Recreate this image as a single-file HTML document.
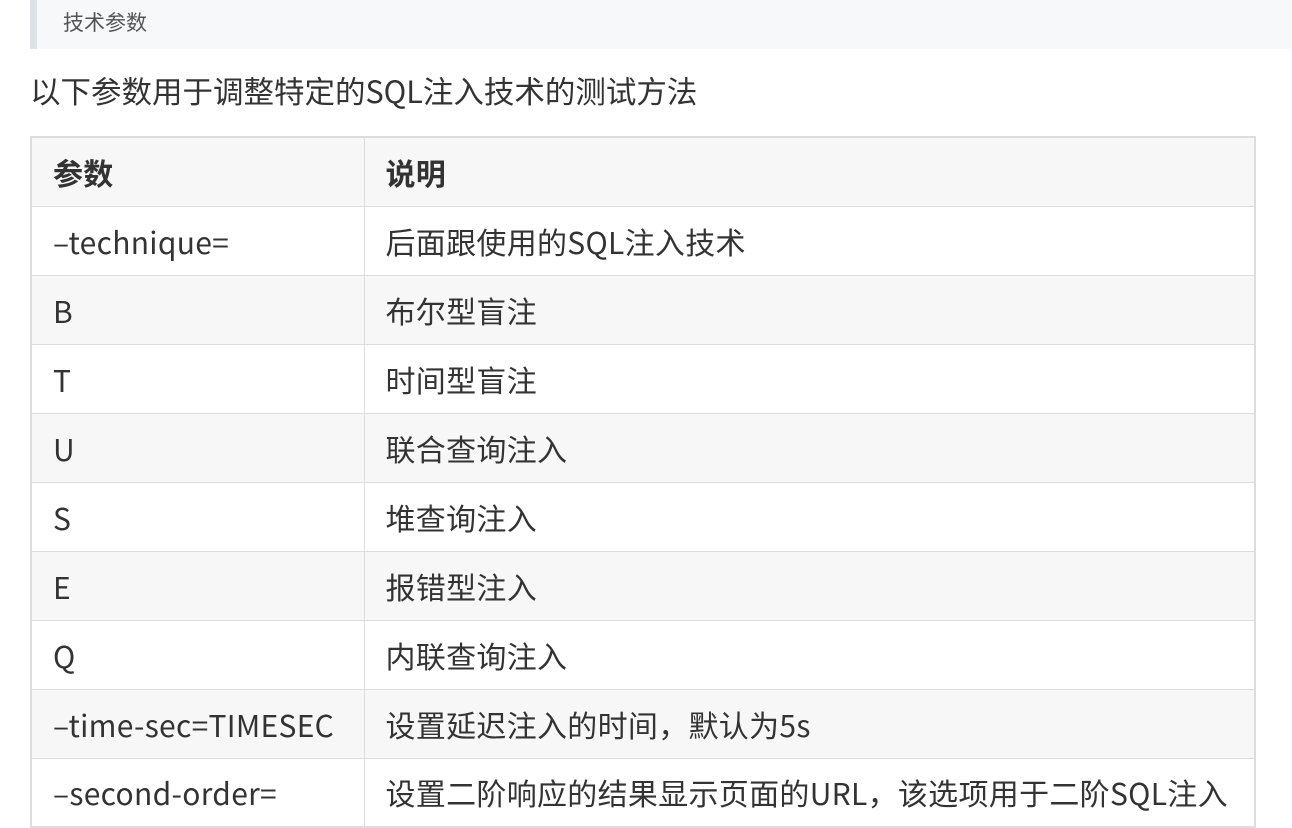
<!DOCTYPE html>
<html><head><meta charset="utf-8"><style>
body{margin:0;width:1292px;height:828px;overflow:hidden;background:#fff;font-family:"Noto Sans CJK SC","Liberation Sans",sans-serif;color:#333;}
.bq{position:absolute;left:30px;top:0;width:1262px;height:49px;background:#f6f8fa;border-left:7px solid #dfe2e5;box-sizing:border-box;}
.bq span{position:absolute;left:26px;top:8px;font-size:21px;line-height:28px;color:#555;}
.p{position:absolute;left:30px;top:70px;font-size:30.5px;line-height:40px;color:#333;}
table{position:absolute;left:30px;top:136px;border-collapse:collapse;width:1226px;border:2px solid #ddd;}
td,th{border:1px solid #ddd;height:69px;padding:0 0 0 21px;font-size:30px;letter-spacing:0.3px;line-height:36px;text-align:left;box-sizing:border-box;vertical-align:middle;}
th{font-weight:bold;background:#f7f7f7;}
td:first-child,th:first-child{width:333px;}
tr.g td{background:#f7f7f7;}
</style></head><body>
<div class="bq"><span>技术参数</span></div>
<div class="p">以下参数用于调整特定的SQL注入技术的测试方法</div>
<table>
<tr><th>参数</th><th>说明</th></tr>
<tr><td>–technique=</td><td>后面跟使用的SQL注入技术</td></tr>
<tr class="g"><td>B</td><td>布尔型盲注</td></tr>
<tr><td>T</td><td>时间型盲注</td></tr>
<tr class="g"><td>U</td><td>联合查询注入</td></tr>
<tr><td>S</td><td>堆查询注入</td></tr>
<tr class="g"><td>E</td><td>报错型注入</td></tr>
<tr><td>Q</td><td>内联查询注入</td></tr>
<tr class="g"><td>–time-sec=TIMESEC</td><td>设置延迟注入的时间，默认为5s</td></tr>
<tr><td>–second-order=</td><td>设置二阶响应的结果显示页面的URL，该选项用于二阶SQL注入</td></tr>
</table>
</body></html>
